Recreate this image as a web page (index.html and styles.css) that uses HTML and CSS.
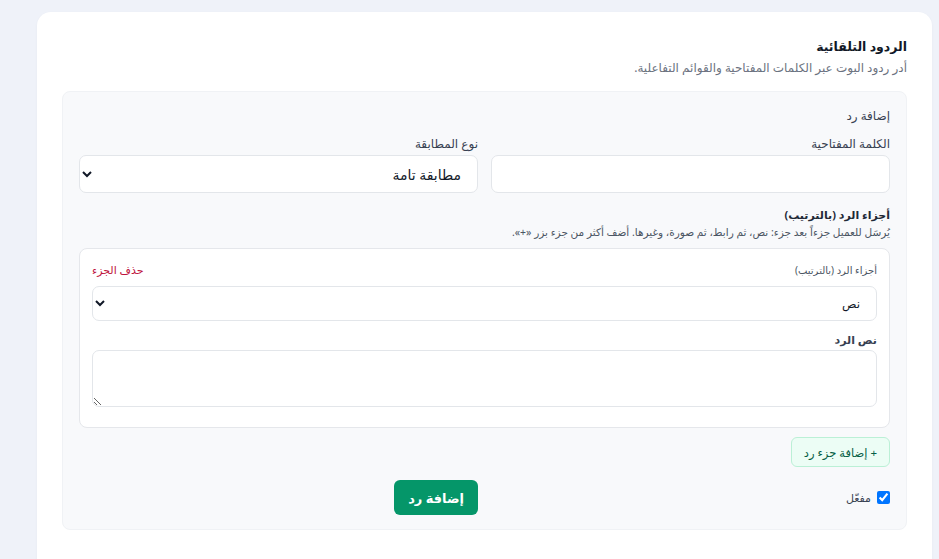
FILE: index.html
```html
<!DOCTYPE html>
<html lang="ar" dir="rtl">

<head>
    <meta charset="UTF-8">
    <meta name="viewport" content="width=device-width, initial-scale=1.0">
    <title>الردود التلقائية</title>
    <link rel="stylesheet" href="styles.css">
</head>

<body>
    <div class="card">
        <h2 class="card-title">الردود التلقائية</h2>
        <p class="card-sub">أدر ردود البوت عبر الكلمات المفتاحية والقوائم التفاعلية.</p>

        <div class="panel">
            <div class="panel-title">إضافة رد</div>

            <div class="grid">
                <div class="field">
                    <label class="label">الكلمة المفتاحية</label>
                    <input class="input" type="text">
                </div>
                <div class="field">
                    <label class="label">نوع المطابقة</label>
                    <select class="input select">
                        <option>مطابقة تامة</option>
                        <option>تحتوي على</option>
                    </select>
                </div>
            </div>

            <div class="parts-head">أجزاء الرد (بالترتيب)</div>
            <div class="parts-hint">يُرسَل للعميل جزءاً بعد جزء: نص، ثم رابط، ثم صورة، وغيرها. أضف أكثر من جزء بزر «+».</div>

            <div class="part">
                <div class="part-top">
                    <span class="part-label">أجزاء الرد (بالترتيب)</span>
                    <a class="part-del" href="#">حذف الجزء</a>
                </div>
                <select class="input select small">
                    <option>نص</option>
                    <option>رابط</option>
                    <option>صورة</option>
                </select>
                <label class="label bold">نص الرد</label>
                <textarea class="input area"></textarea>
            </div>

            <button class="btn-part">+ إضافة جزء رد</button>

            <div class="grid bottom">
                <label class="check"><input type="checkbox" checked> مفعّل</label>
                <div><button class="btn-main">إضافة رد</button></div>
            </div>
        </div>
    </div>
</body>

</html>
```

FILE: styles.css
```css
body {
    font-family: "Noto Sans", "DejaVu Sans", sans-serif;
    background-color: #eff2f9;
    margin: 0;
    padding: 12px 7px 0 37px;
    color: #1f2937;
}

.card {
    background-color: #ffffff;
    border-radius: 14px;
    box-shadow: 0 1px 3px rgba(0, 0, 0, 0.04);
    padding: 24px 25px 30px;
    min-height: 520px;
}

.card-title {
    font-size: 12.5px;
    font-weight: 700;
    line-height: 22px;
    margin: 0;
    color: #111827;
}

.card-sub {
    font-size: 12px;
    line-height: 20px;
    margin: 0 0 13px;
    color: #6b7280;
}

.panel {
    background-color: #f8f9fb;
    border: 1px solid #f0f2f5;
    border-radius: 8px;
    padding: 15px 16px 14px;
}

.panel-title {
    font-size: 12px;
    line-height: 18px;
    color: #374151;
}

.grid {
    display: grid;
    grid-template-columns: 1fr 1fr;
    gap: 13px;
}

.field {
    display: flex;
    flex-direction: column;
    margin-top: 10px;
}

.label {
    font-size: 12px;
    line-height: 18px;
    color: #374151;
    margin-bottom: 2px;
}

.input {
    box-sizing: border-box;
    font-family: inherit;
    font-size: 14px;
    background-color: #ffffff;
    border: 1px solid #e3e6ea;
    border-radius: 7px;
    width: 100%;
    height: 38px;
    padding: 0 12px;
    color: #111827;
}

.select {
    padding-right: 12px;
}

.parts-head {
    font-size: 11px;
    font-weight: 700;
    line-height: 18px;
    margin-top: 13px;
    color: #1f2937;
}

.parts-hint {
    font-size: 10.5px;
    line-height: 16px;
    color: #4b5563;
}

.part {
    background-color: #ffffff;
    border: 1px solid #e5e7eb;
    border-radius: 8px;
    padding: 13px 12px 20px;
    margin-top: 8px;
}

.part-top {
    display: flex;
    justify-content: space-between;
    font-size: 11px;
    line-height: 16px;
    margin-bottom: 8px;
}

.part-label {
    font-size: 10px;
    color: #4b5563;
}

.part-del {
    color: #be123c;
    text-decoration: none;
}

.small {
    height: 35px;
    font-size: 12px;
}

.bold {
    display: block;
    font-weight: 700;
    margin-top: 10px;
    line-height: 17px;
    font-size: 11px;
}

.area {
    display: block;
    height: 57px;
    padding: 8px 12px;
    resize: vertical;
}

.btn-part {
    font-family: inherit;
    font-size: 11.5px;
    margin-top: 9px;
    height: 30px;
    padding: 0 12px;
    background-color: #ecfdf5;
    border: 1px solid #bbf0d6;
    border-radius: 6px;
    color: #065f46;
    cursor: pointer;
}

.bottom {
    margin-top: 13px;
    align-items: center;
}

.check {
    display: flex;
    align-items: center;
    gap: 6px;
    font-size: 11px;
    color: #374151;
}

.check input {
    margin: 0;
    width: 13px;
    height: 13px;
}

.btn-main {
    font-family: inherit;
    font-size: 13px;
    font-weight: 700;
    height: 35px;
    padding: 0 14px;
    background-color: #059669;
    border: none;
    border-radius: 6px;
    color: #ffffff;
    cursor: pointer;
}
```
